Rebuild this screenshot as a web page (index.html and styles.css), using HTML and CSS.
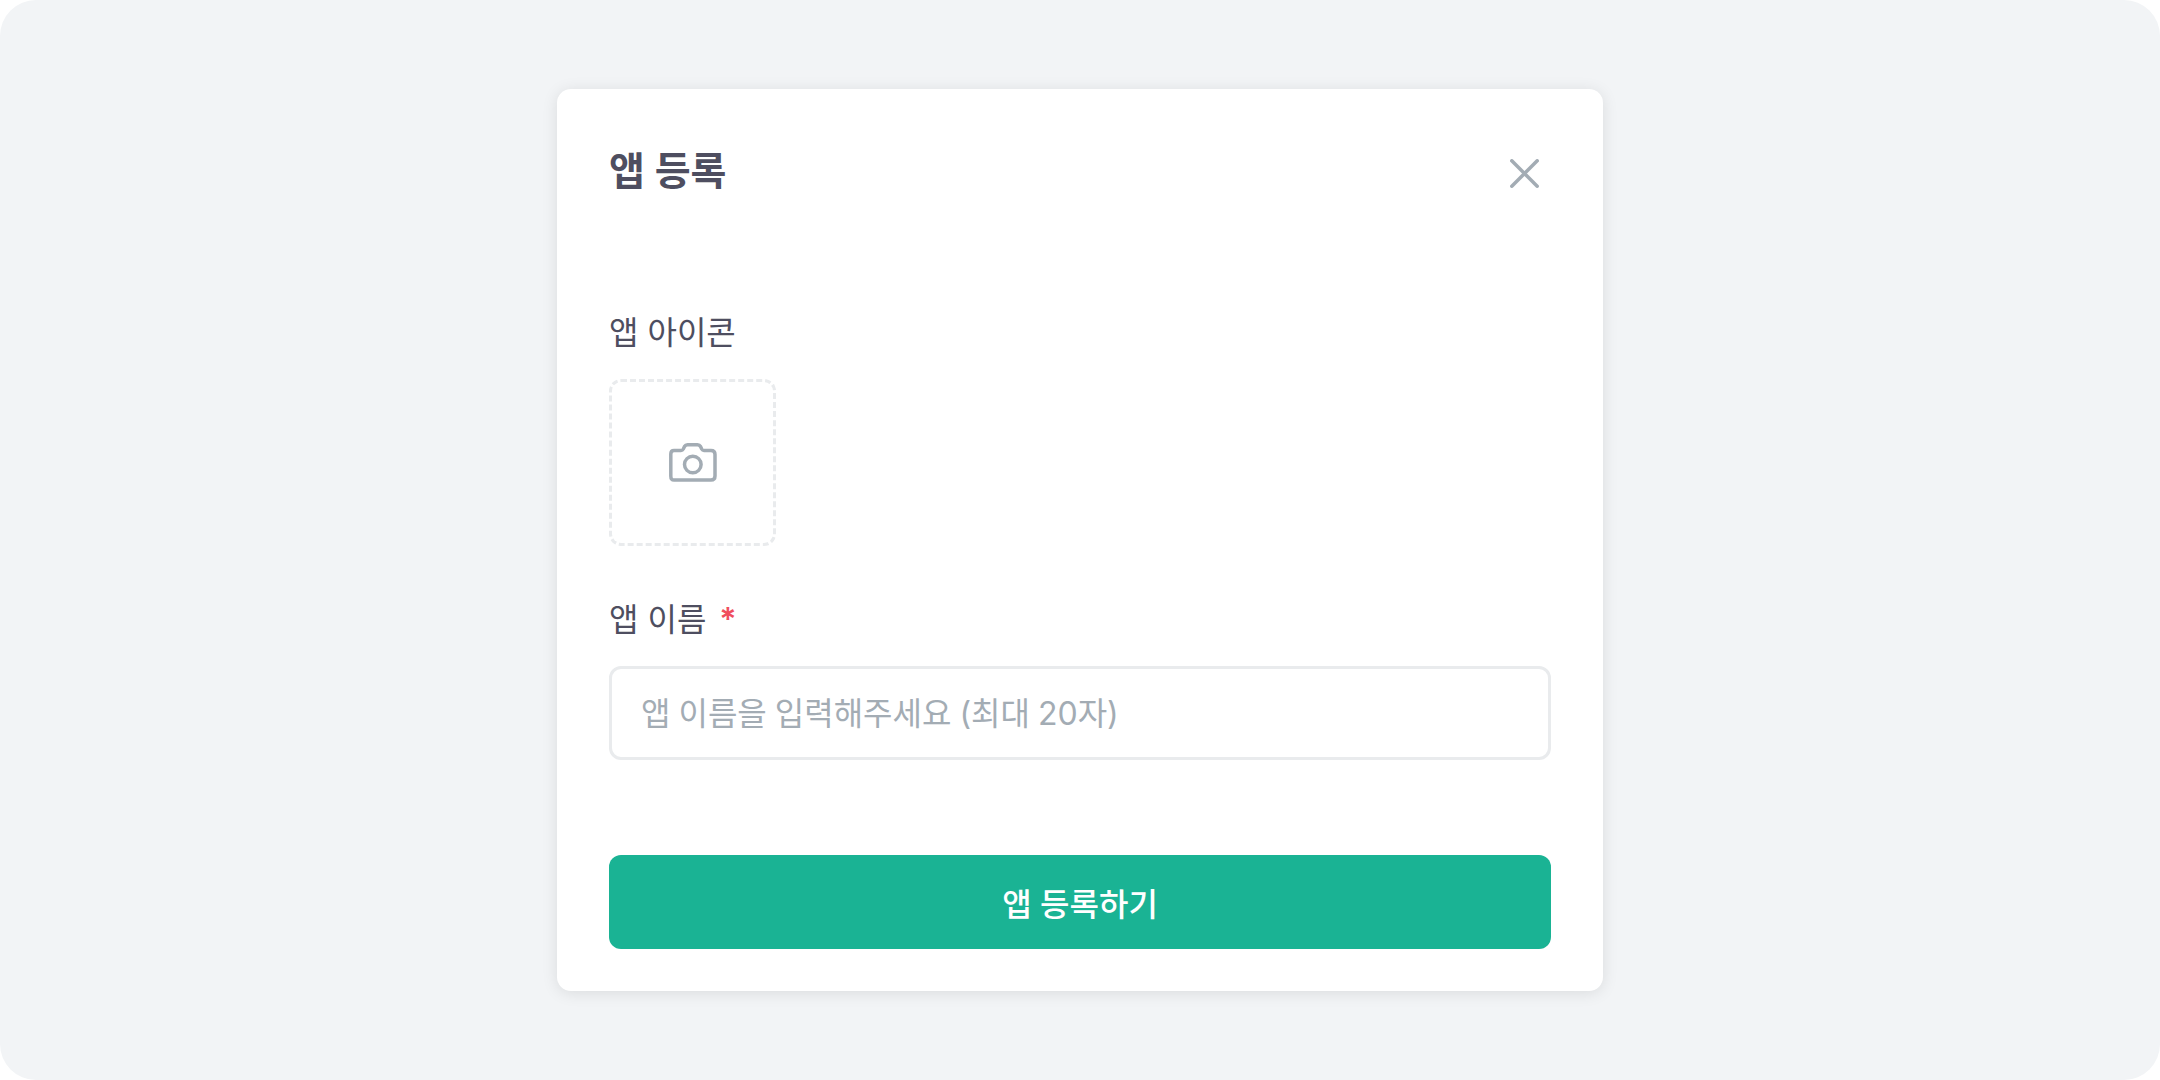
FILE: index.html
```html
<!DOCTYPE html>
<html lang="ko">
<head>
<meta charset="utf-8">
<title>앱 등록</title>
<link rel="stylesheet" href="styles.css">
</head>
<body>
<main class="screen">
  <section class="card">
    <header class="card-head">
      <h1 class="title">앱 등록</h1>
      <button class="close" type="button" aria-label="닫기">
        <svg class="close-icon" viewBox="0 0 29 29" fill="none" stroke="#a3acb4" stroke-width="3.500" stroke-linecap="round"><path d="M1.800 1.800 L27.200 27.200 M27.200 1.800 L1.800 27.200"/></svg>
      </button>
    </header>
    <div class="field field-icon">
      <div class="label">앱 아이콘</div>
      <div class="upload">
        <svg class="camera" viewBox="0 0 48 39" fill="none" stroke="#a3acb4" stroke-width="3.500" stroke-linejoin="round"><path d="M5 7.500 H12 Q13.500 7.500 14.300 6 L15.500 3.500 Q16.500 1.800 18.500 1.800 H28.500 Q30.500 1.800 31.500 3.500 L32.700 6 Q33.500 7.500 35 7.500 H42 Q46 7.500 46 11.500 V33 Q46 37 42 37 H5 Q1.800 37 1.800 33 V11 Q1.800 7.500 5 7.500 Z"/><circle cx="23.800" cy="21.500" r="8.300"/></svg>
      </div>
    </div>
    <div class="field field-name">
      <div class="label">앱 이름<span class="req">*</span></div>
      <input class="input" type="text" placeholder="앱 이름을 입력해주세요 (최대 20자)">
    </div>
    <button class="submit" type="button">앱 등록하기</button>
  </section>
</main>
</body>
</html>
```

FILE: styles.css
```css
* { box-sizing: border-box; }
html, body { margin: 0; padding: 0; background: #fff; }
body { font-family: "Inter", "Noto Sans CJK KR", sans-serif; }
.screen {
  width: 2160px;
  height: 1080px;
  background: #f2f4f6;
  border-radius: 36px;
  display: flex;
  align-items: center;
  justify-content: center;
}
.card {
  width: 1046px;
  height: 902px;
  background: #fff;
  border-radius: 14px;
  box-shadow: 0 2px 16px rgba(0, 0, 0, 0.1);
  padding: 60px 52px 42px;
  display: flex;
  flex-direction: column;
}
.card-head {
  display: flex;
  justify-content: space-between;
  align-items: center;
  height: 44px;
}
.title {
  margin: 0;
  font-size: 39px;
  line-height: 44px;
  font-weight: 600;
  color: #4e4e60;
}
.close {
  border: 0;
  background: none;
  padding: 0;
  margin-right: 12px;
  margin-top: 4px;
  display: flex;
}
.close-icon { width: 29px; height: 29px; }
.field-icon { margin-top: 120px; }
.field-name { margin-top: 54px; }
.label {
  font-size: 32px;
  line-height: 40px;
  font-weight: 400;
  color: #4e4e60;
}
.req { color: #f04e5e; margin-left: 13px; font-weight: 600; }
.upload {
  margin-top: 26px;
  width: 167px;
  height: 167px;
  border: 3px dashed #e9ebed;
  border-radius: 12px;
  display: flex;
  align-items: center;
  justify-content: center;
}
.camera { width: 48px; height: 39px; }
.input {
  display: block;
  margin-top: 26px;
  width: 100%;
  height: 94px;
  border: 3px solid #e9ebed;
  border-radius: 12px;
  padding: 0 29px;
  font-family: inherit;
  font-size: 32px;
  word-spacing: -1px;
  color: #4e4e60;
  background: #fff;
  outline: none;
}
.input::placeholder { color: #a3acb4; opacity: 1; }
.submit {
  margin-top: auto;
  height: 94px;
  width: 100%;
  border: 0;
  border-radius: 12px;
  background: #1ab394;
  color: #fff;
  font-family: inherit;
  font-size: 32px;
  font-weight: 500;
}
```
